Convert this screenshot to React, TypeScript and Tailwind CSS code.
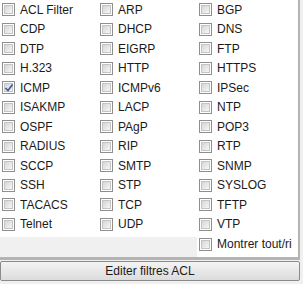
const rows: string[][] = [
  ['ACL Filter', 'ARP', 'BGP'],
  ['CDP', 'DHCP', 'DNS'],
  ['DTP', 'EIGRP', 'FTP'],
  ['H.323', 'HTTP', 'HTTPS'],
  ['ICMP', 'ICMPv6', 'IPSec'],
  ['ISAKMP', 'LACP', 'NTP'],
  ['OSPF', 'PAgP', 'POP3'],
  ['RADIUS', 'RIP', 'RTP'],
  ['SCCP', 'SMTP', 'SNMP'],
  ['SSH', 'STP', 'SYSLOG'],
  ['TACACS', 'TCP', 'TFTP'],
  ['Telnet', 'UDP', 'VTP'],
];

function CheckBox({ checked }: { checked?: boolean }) {
  return (
    <span className="relative grid h-[13px] w-[13px] shrink-0 place-items-center border border-[#8f8f8f] bg-white">
      <span className="h-[9px] w-[9px] border border-[#c4c4c4] bg-gradient-to-br from-[#d6d6d6] to-[#f6f6f6]" />
      {checked && (
        <svg className="absolute left-[1px] top-[1px]" width="10" height="10" viewBox="0 0 10 10">
          <path d="M1.5 5 L4 7.5 L8.5 1.5" fill="none" stroke="#3a5b9a" strokeWidth="1.6" />
        </svg>
      )}
    </span>
  );
}

function Item({ label }: { label: string }) {
  return (
    <div className="flex h-[19.5px] items-center gap-[5px] pl-[2px]">
      <CheckBox checked={label === 'ICMP'} />
      <span className="whitespace-nowrap text-[12px] leading-none text-[#1a1a1a]">{label}</span>
    </div>
  );
}

export default function App() {
  return (
    <div
      className="h-[284px] w-[303px] overflow-hidden bg-[#f0f0f0]"
      style={{ fontFamily: '"Segoe UI", Tahoma, "Liberation Sans", sans-serif' }}
    >
      <div className="w-[300px] overflow-hidden border-b-[3px] border-r-2 border-[#b4b4b4] bg-white">
        <div className="grid grid-cols-[98px_99px_1fr]">
          {rows.map((row) => row.map((label) => <Item key={label} label={label} />))}
          <div className="col-span-2 mt-[3px] h-[20px] bg-[#f0f0f0]" />
          <div className="flex h-[23px] min-w-0 items-center gap-[5px] overflow-hidden pl-[2px] pb-[3px]">
            <CheckBox />
            <span className="whitespace-nowrap text-[12px] leading-none text-[#1a1a1a]">Montrer tout/ri</span>
          </div>
        </div>
      </div>
      <button
        type="button"
        className="mt-[1px] flex h-[20px] w-[300px] items-center justify-center rounded-[2px] border border-[#8a8a8a] bg-gradient-to-b from-[#f4f4f4] to-[#dcdcdc] text-[12px] leading-none text-[#1a1a1a]"
      >
        Editer filtres ACL
      </button>
    </div>
  );
}
